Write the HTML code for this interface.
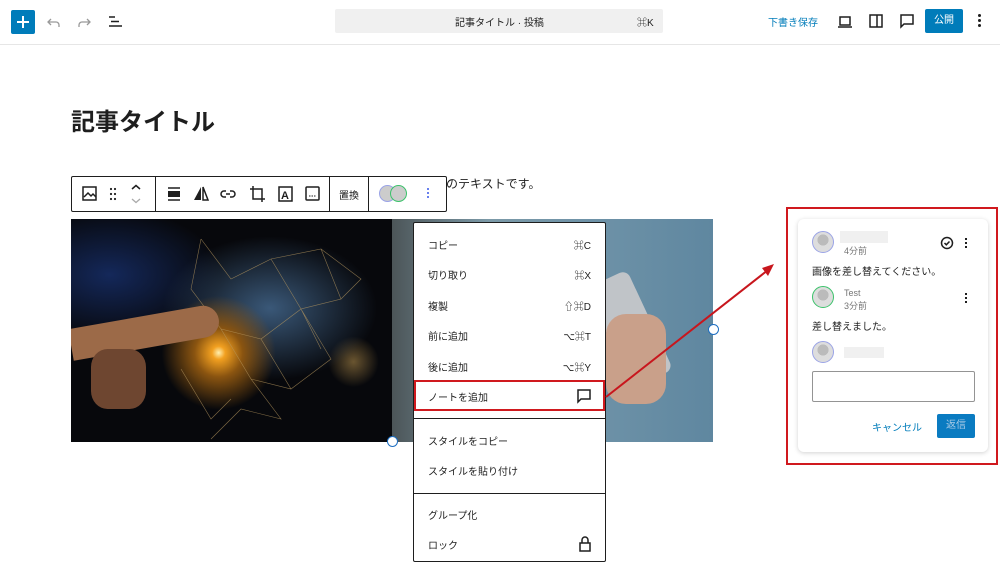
<!DOCTYPE html>
<html><head><meta charset="utf-8"><style>
*{box-sizing:border-box;margin:0;padding:0}
body{width:1000px;height:557px;overflow:hidden;background:#fff;font-family:"Liberation Sans","Noto Sans CJK JP",sans-serif;color:#1e1e1e;position:relative}
.abs{position:absolute}
.top{position:absolute;left:0;top:0;width:1000px;height:45px;border-bottom:1px solid #e6e6e6}
.ico{stroke:#1e1e1e;fill:none;stroke-width:1.5}
.mi{position:absolute;left:14px;font-size:10px;color:#1e1e1e}
.ms{position:absolute;right:14px;font-size:10px}
</style></head><body>
<div class="top">
 <div class="abs" style="left:11px;top:10px;width:24px;height:24px;background:#007cba;border-radius:2px"></div>
 <div class="abs" style="left:17px;top:21px;width:12px;height:2px;background:#fff"></div>
 <div class="abs" style="left:22px;top:16px;width:2px;height:12px;background:#fff"></div>
 <svg class="abs" style="left:45px;top:13px" width="18" height="18"><path d="M6 6 L3 9 L6 12 M3 9 H11 A3 3 0 0 1 14 12 V14" stroke="#999" fill="none" stroke-width="1.3"/></svg>
 <svg class="abs" style="left:75px;top:13px" width="18" height="18"><path d="M12 6 L15 9 L12 12 M15 9 H7 A3 3 0 0 0 4 12 V14" stroke="#999" fill="none" stroke-width="1.3"/></svg>
 <svg class="abs" style="left:106px;top:13px" width="18" height="18"><path d="M3 4H9M5 8.5H13M3 13H16" stroke="#1e1e1e" stroke-width="1.5"/></svg>
 <div class="abs" style="left:335px;top:9px;width:328px;height:24px;background:#f0f0f0;border-radius:2px"></div>
 <div class="abs" style="left:455px;top:14px;font-size:10px">記事タイトル · 投稿</div>
 <div class="abs" style="left:637px;top:14px;font-size:10px">⌘K</div>
 <div class="abs" style="left:768px;top:14px;font-size:10px;color:#007cba">下書き保存</div>
 <svg class="abs" style="left:836px;top:13px" width="18" height="18"><rect x="4" y="4" width="10" height="8" class="ico"/><path d="M2 14H16" class="ico"/></svg>
 <svg class="abs" style="left:867px;top:12px" width="18" height="18"><rect x="3" y="3" width="12" height="12" class="ico"/><path d="M10 3V15" class="ico"/></svg>
 <svg class="abs" style="left:898px;top:12px" width="18" height="18"><path d="M3 3H15V12H6L3 15Z" class="ico"/></svg>
 <div class="abs" style="left:925px;top:9px;width:38px;height:24px;background:#007cba;border-radius:2px;color:#fff;font-size:10px;text-align:center;line-height:24px">公開</div>
 <div class="abs" style="left:978px;top:14px;width:3px;height:3px;background:#1e1e1e;border-radius:50%;box-shadow:0 5px 0 #1e1e1e,0 10px 0 #1e1e1e"></div>
</div>
<div class="abs" style="left:71px;top:102px;font-size:24px;font-weight:bold">記事タイトル</div>
<div class="abs" style="left:446px;top:175px;font-size:12px">のテキストです。</div>
<!-- toolbar -->
<div class="abs" style="left:71px;top:176px;width:376px;height:36px;border:1px solid #1e1e1e;background:#fff;border-radius:2px"></div>
<div class="abs" style="left:155px;top:177px;width:1px;height:34px;background:#1e1e1e"></div>
<div class="abs" style="left:329px;top:177px;width:1px;height:34px;background:#1e1e1e"></div>
<div class="abs" style="left:368px;top:177px;width:1px;height:34px;background:#1e1e1e"></div>
<svg class="abs" style="left:80px;top:184px" width="250" height="20">
 <rect x="3" y="3" width="13" height="13" class="ico" stroke-width="1.3"/><path d="M4 13L8 9L11 12L13 10L16 13" class="ico" stroke-width="1.2"/>
 <g fill="#1e1e1e"><circle cx="31" cy="5" r="1.1"/><circle cx="35" cy="5" r="1.1"/><circle cx="31" cy="10" r="1.1"/><circle cx="35" cy="10" r="1.1"/><circle cx="31" cy="15" r="1.1"/><circle cx="35" cy="15" r="1.1"/></g>
 <path d="M52 5L56 1.5L60 5" class="ico" stroke-width="1.3"/><path d="M52 15L56 18.5L60 15" stroke="#aaa" fill="none" stroke-width="1.3"/>
 <path d="M88 4H100M88 16H100" class="ico"/><rect x="88" y="7" width="12" height="6" fill="#1e1e1e"/>
 <path d="M121 3V16H114Z" fill="#1e1e1e"/><path d="M123 3V16H128Z" class="ico" stroke-width="1.2"/>
 <path d="M146 7H144A3 3 0 0 0 144 13H146M150 7H152A3 3 0 0 1 152 13H150M146 10H150" class="ico" stroke-width="1.3"/>
 <path d="M173 2V15H185M170 5H182V18" class="ico"/>
 <rect x="199" y="3" width="13" height="14" class="ico" stroke-width="1.3"/><text x="201" y="15" font-size="11" font-weight="bold" fill="#1e1e1e">A</text>
 <rect x="226" y="3" width="13" height="13" rx="1" class="ico" stroke-width="1.3"/><path d="M229 12H236" stroke="#1e1e1e" stroke-dasharray="1.5 1"/>
</svg>
<div class="abs" style="left:339px;top:187px;font-size:10px">置換</div>
<div class="abs" style="left:379px;top:185px;width:17px;height:17px;border-radius:50%;border:1.5px solid #9aa3e6;background:#ccc"></div>
<div class="abs" style="left:390px;top:185px;width:17px;height:17px;border-radius:50%;border:1.5px solid #3cc26b;background:#ccc"></div>
<div class="abs" style="left:427px;top:188px;width:2px;height:2px;background:#3858e9;border-radius:50%;box-shadow:0 4px 0 #3858e9,0 8px 0 #3858e9"></div>
<!-- images -->
<div class="abs" style="left:71px;top:219px;width:321px;height:223px;overflow:hidden;background:radial-gradient(circle at 46% 60%,#fff0b0 0,#f2a020 3%,#8a5410 11%,transparent 26%),radial-gradient(ellipse at 62% 40%,#3a5878 0,transparent 38%),radial-gradient(ellipse at 12% 25%,#14285a 0,transparent 28%),radial-gradient(circle at 88% 64%,#6a5530 0,transparent 8%),#07080c">
 <svg width="321" height="223" style="position:absolute;left:0;top:0"><g stroke="#b89860" stroke-width="0.6" fill="none" opacity="0.7"><path d="M130 20L160 60L200 40L230 90L190 120L150 110L180 160L210 200L170 190L140 220M200 40L250 30L270 80L230 90L260 140L220 170L180 160M150 110L120 70L130 20M190 120L220 170M250 30L290 60L270 80M110 150L140 200L160 180M230 90L250 130"/></g></svg>
 <div class="abs" style="left:0;top:110px;width:150px;height:32px;background:#9c6a48;border-radius:0 18px 18px 0;transform:rotate(-10deg);transform-origin:left"></div>
 <div class="abs" style="left:20px;top:130px;width:55px;height:60px;background:#6e4630;border-radius:30%"></div>
</div>
<div class="abs" style="left:392px;top:219px;width:321px;height:223px;overflow:hidden;background:linear-gradient(90deg,#4c5558 0,#7c9aa8 30%,#6f93a8 60%,#5f87a0 100%)">
 <div class="abs" style="left:215px;top:55px;width:45px;height:110px;background:#c0c4c8;border-radius:8px;transform:rotate(-25deg)"></div>
 <div class="abs" style="left:214px;top:95px;width:60px;height:90px;background:#c9a08a;border-radius:20px"></div>
</div>
<div class="abs" style="left:387px;top:436px;width:11px;height:11px;border-radius:50%;border:1.5px solid #1e6fc2;background:#fff"></div>
<div class="abs" style="left:708px;top:324px;width:11px;height:11px;border-radius:50%;border:1.5px solid #1e6fc2;background:#fff"></div>
<!-- menu -->
<div class="abs" style="left:413px;top:222px;width:193px;height:340px;background:#fff;border:1px solid #1e1e1e;border-radius:2px">
 <div class="mi" style="top:14px">コピー</div><div class="ms" style="top:14px">⌘C</div>
 <div class="mi" style="top:44px">切り取り</div><div class="ms" style="top:44px">⌘X</div>
 <div class="mi" style="top:75px">複製</div><div class="ms" style="top:75px">⇧⌘D</div>
 <div class="mi" style="top:105px">前に追加</div><div class="ms" style="top:105px">⌥⌘T</div>
 <div class="mi" style="top:136px">後に追加</div><div class="ms" style="top:136px">⌥⌘Y</div>
 <div class="mi" style="top:166px">ノートを追加</div>
 <svg class="abs" style="left:162px;top:165px" width="16" height="16"><path d="M2 2H14V11H5L2 14Z" class="ico" stroke-width="1.3"/></svg>
 <div class="abs" style="left:0;top:195px;width:191px;height:1px;background:#1e1e1e"></div>
 <div class="mi" style="top:210px">スタイルをコピー</div>
 <div class="mi" style="top:240px">スタイルを貼り付け</div>
 <div class="abs" style="left:0;top:270px;width:191px;height:1px;background:#1e1e1e"></div>
 <div class="mi" style="top:284px">グループ化</div>
 <div class="mi" style="top:314px">ロック</div>
 <svg class="abs" style="left:164px;top:313px" width="14" height="16"><rect x="2" y="7" width="10" height="8" class="ico" stroke-width="1.3"/><path d="M4 7V4A3 3 0 0 1 10 4V7" class="ico" stroke-width="1.3"/></svg>
</div>
<div class="abs" style="left:414px;top:380px;width:191px;height:31px;border:2px solid #d0191e"></div>
<svg class="abs" style="left:0;top:0" width="1000" height="557"><path d="M606 397L768 270" stroke="#c8161d" stroke-width="2"/><path d="M774 264L762 268L768 276Z" fill="#c8161d"/></svg>
<!-- panel -->
<div class="abs" style="left:786px;top:207px;width:212px;height:258px;border:2px solid #d0191e"></div>
<div class="abs" style="left:798px;top:219px;width:190px;height:233px;background:#fff;border-radius:6px;box-shadow:0 1px 5px rgba(0,0,0,.18)">
 <div class="abs" style="left:14px;top:12px;width:22px;height:22px;border-radius:50%;border:1.5px solid #9aa3e6;background:radial-gradient(circle at 50% 40%,#bbb 35%,#ddd 36%)"></div>
 <div class="abs" style="left:42px;top:12px;width:48px;height:12px;background:#f0f0f0"></div>
 <div class="abs" style="left:46px;top:25px;font-size:9px;color:#757575">4分前</div>
 <svg class="abs" style="left:142px;top:17px" width="14" height="14"><circle cx="7" cy="7" r="5.5" class="ico" stroke-width="1.3"/><path d="M4.5 7L6.3 8.8L9.5 5.5" class="ico" stroke-width="1.3"/></svg>
 <div class="abs" style="left:167px;top:19px;width:2px;height:2px;background:#1e1e1e;box-shadow:0 4px 0 #1e1e1e,0 8px 0 #1e1e1e"></div>
 <div class="abs" style="left:14px;top:44px;font-size:10px">画像を差し替えてください。</div>
 <div class="abs" style="left:14px;top:67px;width:22px;height:22px;border-radius:50%;border:1.5px solid #3cc26b;background:radial-gradient(circle at 50% 40%,#bbb 35%,#ddd 36%)"></div>
 <div class="abs" style="left:46px;top:69px;font-size:9px;color:#757575">Test</div>
 <div class="abs" style="left:46px;top:80px;font-size:9px;color:#757575">3分前</div>
 <div class="abs" style="left:167px;top:74px;width:2px;height:2px;background:#1e1e1e;box-shadow:0 4px 0 #1e1e1e,0 8px 0 #1e1e1e"></div>
 <div class="abs" style="left:14px;top:99px;font-size:10px">差し替えました。</div>
 <div class="abs" style="left:14px;top:122px;width:22px;height:22px;border-radius:50%;border:1.5px solid #9aa3e6;background:radial-gradient(circle at 50% 40%,#bbb 35%,#ddd 36%)"></div>
 <div class="abs" style="left:46px;top:128px;width:40px;height:11px;background:#f0f0f0"></div>
 <div class="abs" style="left:14px;top:152px;width:163px;height:31px;border:1px solid #949494;border-radius:2px"></div>
 <div class="abs" style="left:74px;top:200px;font-size:10px;color:#007cba">キャンセル</div>
 <div class="abs" style="left:139px;top:195px;width:38px;height:24px;background:#0a7bc1;border-radius:2px;color:#a9cbe6;font-size:10px;text-align:center;line-height:24px">返信</div>
</div>
</body></html>
